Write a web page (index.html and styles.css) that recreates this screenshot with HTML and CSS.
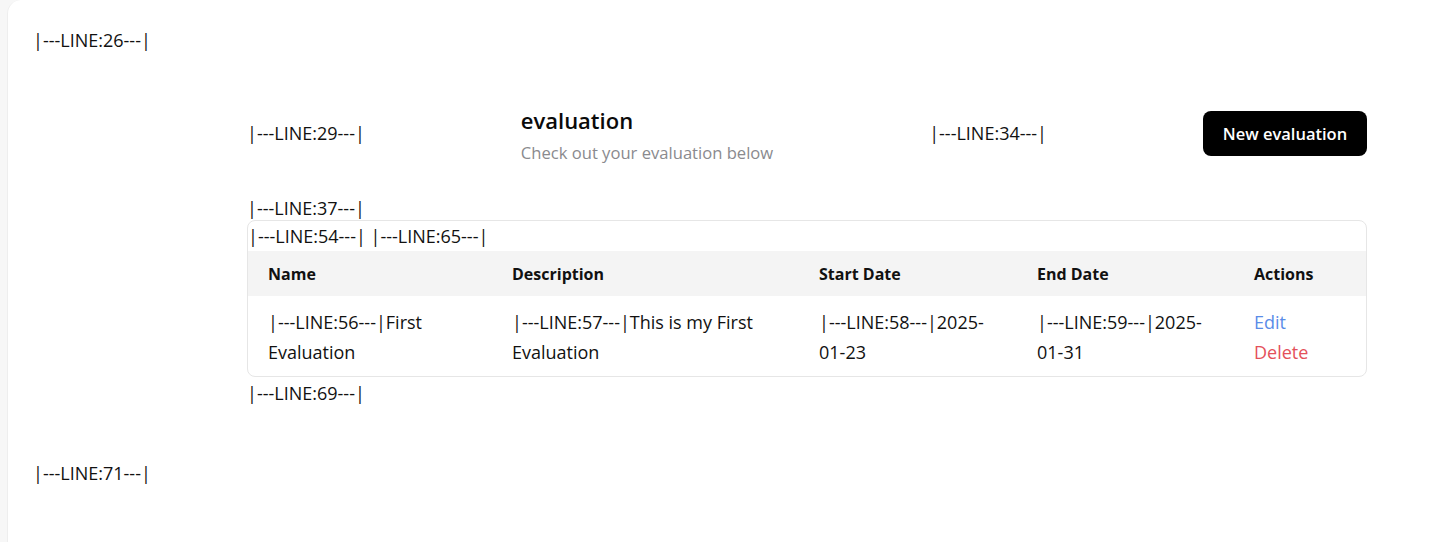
FILE: index.html
```html
<!DOCTYPE html>
<html lang="en">
<head>
<meta charset="utf-8">
<title>evaluation</title>
<link rel="stylesheet" href="styles.css">
</head>
<body>
<div class="page">
  <div class="marker top-marker">|---LINE:26---|</div>
  <section class="content">
    <header class="head">
      <div class="marker">|---LINE:29---|</div>
      <div class="title-block">
        <h1 class="title">evaluation</h1>
        <p class="subtitle">Check out your evaluation below</p>
      </div>
      <div class="marker">|---LINE:34---|</div>
      <button class="btn">New evaluation</button>
    </header>
    <div class="marker before-card">|---LINE:37---|</div>
    <div class="card">
      <div class="marker card-marker">|---LINE:54---| |---LINE:65---|</div>
      <table class="grid">
        <colgroup>
          <col class="c1"><col class="c2"><col class="c3"><col class="c4"><col class="c5">
        </colgroup>
        <thead>
          <tr><th>Name</th><th>Description</th><th>Start Date</th><th>End Date</th><th>Actions</th></tr>
        </thead>
        <tbody>
          <tr>
            <td>|---LINE:56---|First Evaluation</td>
            <td>|---LINE:57---|This is my First Evaluation</td>
            <td>|---LINE:58---|2025-01-23</td>
            <td>|---LINE:59---|2025-01-31</td>
            <td><a class="act edit">Edit</a><a class="act del">Delete</a></td>
          </tr>
        </tbody>
      </table>
    </div>
    <div class="marker after-card">|---LINE:69---|</div>
  </section>
  <div class="marker bottom-marker">|---LINE:71---|</div>
</div>
</body>
</html>
```

FILE: styles.css
```css
html, body {
  margin: 0;
  padding: 0;
  background: #f7f7f7;
  font-family: "Open Sans", "Noto Sans", "Liberation Sans", sans-serif;
  color: #111111;
}
.page {
  margin-left: 7px;
  background: #ffffff;
  border-top-left-radius: 14px;
  border-left: 1px solid #eeeeee;
  min-height: 560px;
  padding: 28px 0 0 25px;
  box-sizing: border-box;
}
.marker {
  font-size: 18px;
  line-height: 24px;
  white-space: nowrap;
}
.content {
  width: 1120px;
  margin-left: 214px;
  margin-top: 51px;
}
.head {
  display: flex;
  justify-content: space-between;
  align-items: center;
  height: 60px;
}
.title-block {
  display: flex;
  flex-direction: column;
  margin-top: 6px;
}
.title {
  margin: 0;
  font-size: 22px;
  line-height: 30px;
  font-weight: 600;
  color: #0a0a0a;
}
.subtitle {
  margin: 3px 0 0;
  font-size: 16.6px;
  line-height: 30px;
  color: #8a8a8e;
}
.btn {
  width: 164px;
  height: 45px;
  background: #000;
  color: #fff;
  border: none;
  border-radius: 8px;
  font-family: inherit;
  font-size: 16.5px;
  font-weight: 600;
}
.before-card { margin-top: 33px; }
.card {
  border: 1px solid #e6e6e6;
  border-radius: 8px;
  overflow: hidden;
}
.card-marker { line-height: 30px; }
.grid {
  width: 100%;
  border-collapse: collapse;
  table-layout: fixed;
}
.c1 { width: 244px; }
.c2 { width: 307px; }
.c3 { width: 218px; }
.c4 { width: 217px; }
.c5 { width: auto; }
.grid th {
  background: #f4f4f4;
  text-align: left;
  font-size: 16px;
  font-weight: 700;
  height: 45px;
  padding: 0 20px;
}
.grid td {
  font-size: 18px;
  line-height: 30px;
  padding: 11px 20px 9px;
  vertical-align: top;
}
.act { display: block; }
.edit { color: #5a8ce8; }
.del { color: #e4505a; }
.after-card { margin-top: 4px; }
.bottom-marker { margin-top: 56px; }
```
